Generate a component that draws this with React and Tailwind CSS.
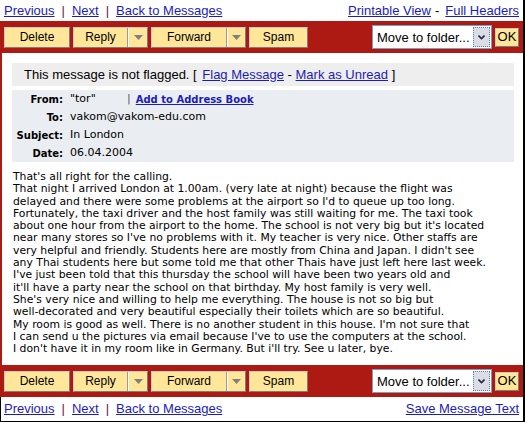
import React from "react";

const RED = "bg-[#ad1a14]";

function Arrow() {
  return (
    <svg width="9" height="5" viewBox="0 0 9 5">
      <polygon points="0,0 9,0 4.5,5" fill="#808080" />
    </svg>
  );
}

function Btn({ children, w }) {
  return (
    <div
      className={`h-[21px] ${w} flex items-center justify-center bg-[#ffe699] border border-t-[#c9c9c9] border-l-[#c9c9c9] border-r-[#7d7d7d] border-b-[#7d7d7d] text-[12px] text-black`}
    >
      {children}
    </div>
  );
}

function SplitBtn({ label, main, arrow }) {
  return (
    <div className="h-[21px] flex bg-[#ffe699] border border-t-[#c9c9c9] border-l-[#c9c9c9] border-r-[#7d7d7d] border-b-[#7d7d7d] text-[12px] text-black">
      <div className={`${main} flex items-center justify-center border-r border-[#9a9a9a]`}>{label}</div>
      <div className={`${arrow} flex items-center justify-center border-l border-white`}>
        <Arrow />
      </div>
    </div>
  );
}

function Toolbar() {
  return (
    <div className={`h-[32px] shrink-0 ${RED} flex items-center pl-[4px] pr-[4px]`}>
      <div className="flex items-center gap-[3px]">
        <Btn w="w-[66px]">Delete</Btn>
        <SplitBtn label="Reply" main="w-[54px]" arrow="w-[19px]" />
        <SplitBtn label="Forward" main="w-[75px]" arrow="w-[18px]" />
        <Btn w="w-[59px]">Spam</Btn>
      </div>
      <div className="ml-auto flex items-center gap-[3px]">
        <div className="h-[24px] w-[120px] bg-white border border-[#7f9db9] flex items-center text-[13px] text-black">
          <span className="pl-[4px] flex-1 leading-none">Move to folder...</span>
          <div className="h-[20px] w-[17px] mr-[1px] border border-dotted border-[#5b86c4] bg-[#dcdde4] flex items-center justify-center">
            <svg width="7" height="5" viewBox="0 0 7 5">
              <polyline points="0.5,0.5 3.5,3.5 6.5,0.5" fill="none" stroke="#1e2a4a" strokeWidth="1.6" />
            </svg>
          </div>
        </div>
        <div className="h-[19px] w-[24px] bg-[#ffe699] border border-t-[#c9c9c9] border-l-[#c9c9c9] border-r-[#7d7d7d] border-b-[#7d7d7d] flex items-center justify-center text-[13px] text-black">
          OK
        </div>
      </div>
    </div>
  );
}

const L = "text-[#1c1cb8] underline";
const SEP = "text-[#6b2142]";

function NavLinks() {
  return (
    <div className="flex items-center">
      <span className={L}>Previous</span>
      <span className={`${SEP} px-[7px]`}>|</span>
      <span className={L}>Next</span>
      <span className={`${SEP} px-[7px]`}>|</span>
      <span className={L}>Back to Messages</span>
    </div>
  );
}

const body = [
  "That's all right for the calling.",
  "That night I arrived London at 1.00am. (very late at night) because the flight was",
  "delayed and there were some problems at the airport so I'd to queue up too long.",
  "Fortunately, the taxi driver and the host family was still waiting for me. The taxi took",
  "about one hour from the airport to the home. The school is not very big but it's located",
  "near many stores so I've no problems with it. My teacher is very nice. Other staffs are",
  "very helpful and friendly. Students here are mostly from China and Japan. I didn't see",
  "any Thai students here but some told me that other Thais have just left here last week.",
  "I've just been told that this thursday the school will have been two years old and",
  "it'll have a party near the school on that birthday. My host family is very well.",
  "She's very nice and willing to help me everything. The house is not so big but",
  "well-decorated and very beautiful especially their toilets which are so beautiful.",
  "My room is good as well. There is no another student in this house. I'm not sure that",
  "I can send u the pictures via email because I've to use the computers at the school.",
  "I don't have it in my room like in Germany. But i'll try. See u later, bye.",
];

function HRow({ label, children }) {
  return (
    <div className="h-[18px] flex items-center">
      <div className="w-[51px] text-right font-bold text-[10px] text-black">{label}</div>
      <div className="pl-[7px] text-[11px] text-black flex items-center">{children}</div>
    </div>
  );
}

export default function App() {
  return (
    <div
      className="w-[525px] h-[422px] bg-white flex flex-col border-r-[2px] border-b border-black overflow-hidden"
      style={{ fontFamily: '"Liberation Sans", Arial, sans-serif' }}
    >
      <div className="h-[21px] shrink-0 flex items-center justify-between pl-[4px] pr-[4px] text-[13px]">
        <NavLinks />
        <div className="flex items-center">
          <span className={L}>Printable View</span>
          <span className="text-black px-[4px]">-</span>
          <span className={`${L} ml-[2px]`}>Full Headers</span>
        </div>
      </div>
      <Toolbar />
      <div className="flex-1 border-l-2 border-[#ad1a14] pt-[10px] pl-[10px] pr-[9px]">
        <div className="h-[23px] bg-[#eeeeee] flex items-center pl-[12px] text-[13px] text-black">
          <span>This message is not flagged. [&nbsp;</span>
          <span className={`${L} ml-[2px]`}>Flag Message</span>
          <span>&nbsp;-&nbsp;</span>
          <span className={L}>Mark as Unread</span>
          <span>&nbsp;]</span>
        </div>
        <div
          className="mt-[4px] bg-[#eaeef2]"
          style={{ fontFamily: '"DejaVu Sans", Verdana, sans-serif' }}
        >
          <HRow label="From:">
            <span className="w-[57px]">"tor"</span>
            <span className="text-[#555] pr-[5px]">|</span>
            <span className="font-bold text-[10px] text-[#1c1cb8] underline">Add to Address Book</span>
          </HRow>
          <HRow label="To:">vakom@vakom-edu.com</HRow>
          <HRow label="Subject:">In London</HRow>
          <HRow label="Date:">06.04.2004</HRow>
        </div>
        <div
          className="mt-[9px] pl-[1px] text-[10.8px] leading-[12.3px] text-black whitespace-pre"
          style={{ fontFamily: '"DejaVu Sans", Verdana, sans-serif' }}
        >
          {body.map((l, i) => (
            <div key={i}>{l}</div>
          ))}
        </div>
      </div>
      <Toolbar />
      <div className="h-[24px] shrink-0 flex items-center justify-between pl-[3px] pr-[4px] text-[13px] border-l border-black">
        <NavLinks />
        <span className={L}>Save Message Text</span>
      </div>
    </div>
  );
}
